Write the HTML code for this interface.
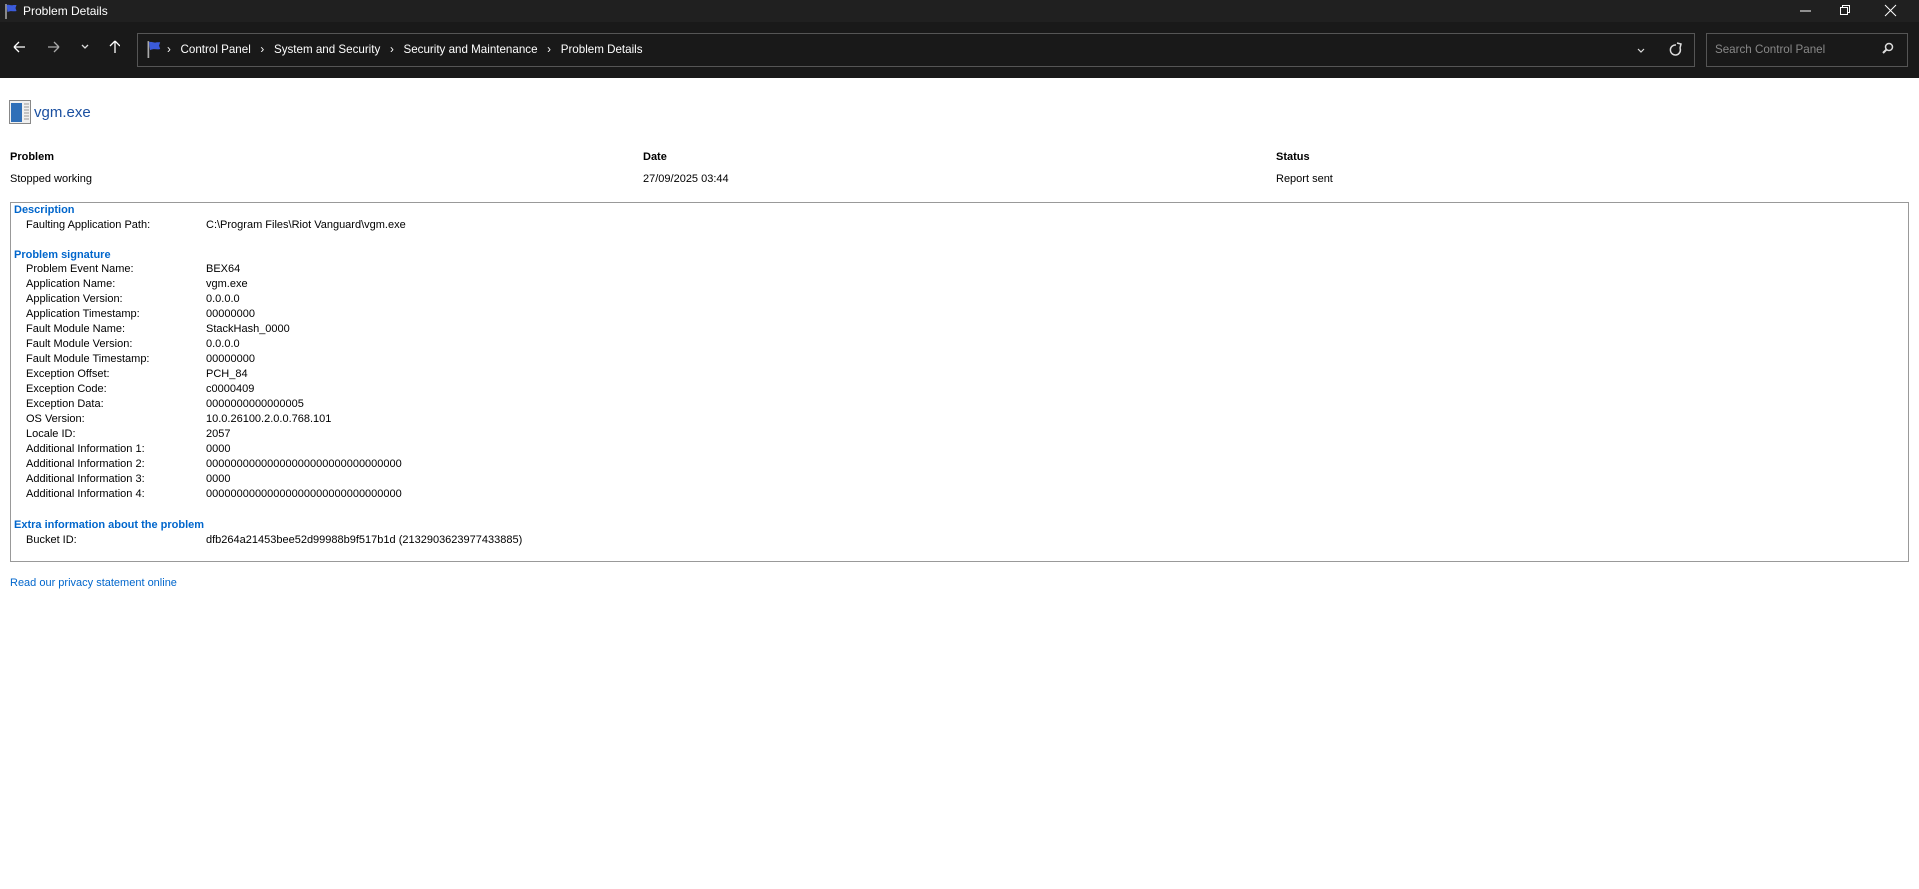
<!DOCTYPE html>
<html><head><meta charset="utf-8"><style>
*{margin:0;padding:0;box-sizing:border-box}
body{width:1919px;height:889px;background:#fff;font-family:"Liberation Sans",sans-serif;font-size:11px;color:#000;position:relative;overflow:hidden}
.a{position:absolute;white-space:nowrap;line-height:15px}
#tb{position:absolute;left:0;top:0;width:1919px;height:22px;background:#202020;color:#fff}
#nav{position:absolute;left:0;top:22px;width:1919px;height:56px;background:#191919;color:#fff}
.box{position:absolute;border:1px solid #555;}
.h{color:#0066cc;font-weight:bold}
.l{left:26px}.v{left:206px}
</style></head><body>
<div id="tb">
<svg style="position:absolute;left:3px;top:3px" width="16" height="16" viewBox="0 0 16 16"><path d="M3 1v15" stroke="#aaa" stroke-width="1.5"/><path d="M3.5 2c3-1 4 1 7 0l3 0-1 3 1 3c-3 1-5-1-9 1z" fill="#3b5bdb"/></svg>
<div class="a" style="left:23px;top:4px;color:#fff;font-size:12px">Problem Details</div>
<svg style="position:absolute;left:1795px;top:4px" width="120" height="14"><path d="M5 7h11" stroke="#fff"/><rect x="45.5" y="3.5" width="7" height="7" fill="none" stroke="#fff"/><path d="M47.5 3.5v-2h7v7h-2" fill="none" stroke="#fff"/><path d="M90 1l11 11M101 1l-11 11" stroke="#fff"/></svg>
</div>
<div id="nav">
<svg style="position:absolute;left:10px;top:12px" width="110" height="26" viewBox="0 0 110 26"><path d="M4 13h11M4 13l5-5M4 13l5 5" stroke="#fff" stroke-width="1.3" fill="none"/><path d="M38 13h11M49 13l-5-5M49 13l-5 5" stroke="#aaa" stroke-width="1.3" fill="none"/><path d="M72 11l3 3 3-3" stroke="#ddd" stroke-width="1.3" fill="none"/><path d="M105 19V7M105 7l-5 5M105 7l5 5" stroke="#fff" stroke-width="1.3" fill="none"/></svg>
<div class="box" style="left:137px;top:11px;width:1558px;height:34px;border-color:#555"></div>
<svg style="position:absolute;left:145px;top:18px" width="18" height="18" viewBox="0 0 16 16"><path d="M3 1v15" stroke="#aaa" stroke-width="1.5"/><path d="M3.5 2c3-1 4 1 7 0l3 0-1 3 1 3c-3 1-5-1-9 1z" fill="#3b5bdb"/></svg>
<div class="a" style="left:167px;top:20px;color:#fff;font-size:11.6px">›&nbsp;&nbsp; Control Panel &nbsp;&nbsp;›&nbsp;&nbsp; System and Security &nbsp;&nbsp;›&nbsp;&nbsp; Security and Maintenance &nbsp;&nbsp;›&nbsp;&nbsp; Problem Details</div>
<svg style="position:absolute;left:1630px;top:18px" width="60" height="20"><path d="M8 9l3 3 3-3" stroke="#ddd" fill="none" stroke-width="1.2"/><path d="M46 5a5 5 0 1 0 4 3" stroke="#ddd" fill="none" stroke-width="1.5"/><path d="M47 3l4 1-1 4" stroke="#ddd" fill="none" stroke-width="1.5"/></svg>
<div class="box" style="left:1706px;top:11px;width:202px;height:34px"></div>
<div class="a" style="left:1715px;top:20px;color:#888;font-size:11.6px">Search Control Panel</div>
<svg style="position:absolute;left:1880px;top:19px" width="16" height="16"><circle cx="9" cy="6" r="3.5" stroke="#ddd" stroke-width="1.5" fill="none"/><path d="M7 8l-4 4" stroke="#ddd" stroke-width="2"/></svg>
</div>
<svg style="position:absolute;left:9px;top:100px" width="22" height="24" viewBox="0 0 22 24"><rect x="0.5" y="0.5" width="21" height="23" fill="#f0f0f0" stroke="#888"/><rect x="2" y="3" width="11" height="19" fill="#2f6fb8"/><path d="M15 4h5M15 7h5M15 10h5M15 13h5M15 16h5M15 19h5" stroke="#999"/></svg>
<div class="a" style="left:34px;top:104px;font-size:15px;line-height:18px;color:#1a4fa0">vgm.exe</div>
<div class="a" style="left:10px;top:150px;font-weight:bold">Problem</div>
<div class="a" style="left:643px;top:150px;font-weight:bold">Date</div>
<div class="a" style="left:1276px;top:150px;font-weight:bold">Status</div>
<div class="a" style="left:10px;top:172px">Stopped working</div>
<div class="a" style="left:643px;top:172px">27/09/2025 03:44</div>
<div class="a" style="left:1276px;top:172px">Report sent</div>
<div class="box" style="left:10px;top:202px;width:1899px;height:360px;border-color:#999"></div>
<div class="a h" style="left:14px;top:203px">Description</div>
<div class="a l" style="top:218px">Faulting Application Path:</div><div class="a v" style="top:218px">C:\Program Files\Riot Vanguard\vgm.exe</div>
<div class="a h" style="left:14px;top:248px">Problem signature</div>
<div class="a l" style="top:262px">Problem Event Name:</div><div class="a v" style="top:262px">BEX64</div>
<div class="a l" style="top:277px">Application Name:</div><div class="a v" style="top:277px">vgm.exe</div>
<div class="a l" style="top:292px">Application Version:</div><div class="a v" style="top:292px">0.0.0.0</div>
<div class="a l" style="top:307px">Application Timestamp:</div><div class="a v" style="top:307px">00000000</div>
<div class="a l" style="top:322px">Fault Module Name:</div><div class="a v" style="top:322px">StackHash_0000</div>
<div class="a l" style="top:337px">Fault Module Version:</div><div class="a v" style="top:337px">0.0.0.0</div>
<div class="a l" style="top:352px">Fault Module Timestamp:</div><div class="a v" style="top:352px">00000000</div>
<div class="a l" style="top:367px">Exception Offset:</div><div class="a v" style="top:367px">PCH_84</div>
<div class="a l" style="top:382px">Exception Code:</div><div class="a v" style="top:382px">c0000409</div>
<div class="a l" style="top:397px">Exception Data:</div><div class="a v" style="top:397px">0000000000000005</div>
<div class="a l" style="top:412px">OS Version:</div><div class="a v" style="top:412px">10.0.26100.2.0.0.768.101</div>
<div class="a l" style="top:427px">Locale ID:</div><div class="a v" style="top:427px">2057</div>
<div class="a l" style="top:442px">Additional Information 1:</div><div class="a v" style="top:442px">0000</div>
<div class="a l" style="top:457px">Additional Information 2:</div><div class="a v" style="top:457px">00000000000000000000000000000000</div>
<div class="a l" style="top:472px">Additional Information 3:</div><div class="a v" style="top:472px">0000</div>
<div class="a l" style="top:487px">Additional Information 4:</div><div class="a v" style="top:487px">00000000000000000000000000000000</div>
<div class="a h" style="left:14px;top:518px">Extra information about the problem</div>
<div class="a l" style="top:533px">Bucket ID:</div><div class="a v" style="top:533px">dfb264a21453bee52d99988b9f517b1d (2132903623977433885)</div>
<div class="a" style="left:10px;top:576px;color:#0066cc">Read our privacy statement online</div>
</body></html>
